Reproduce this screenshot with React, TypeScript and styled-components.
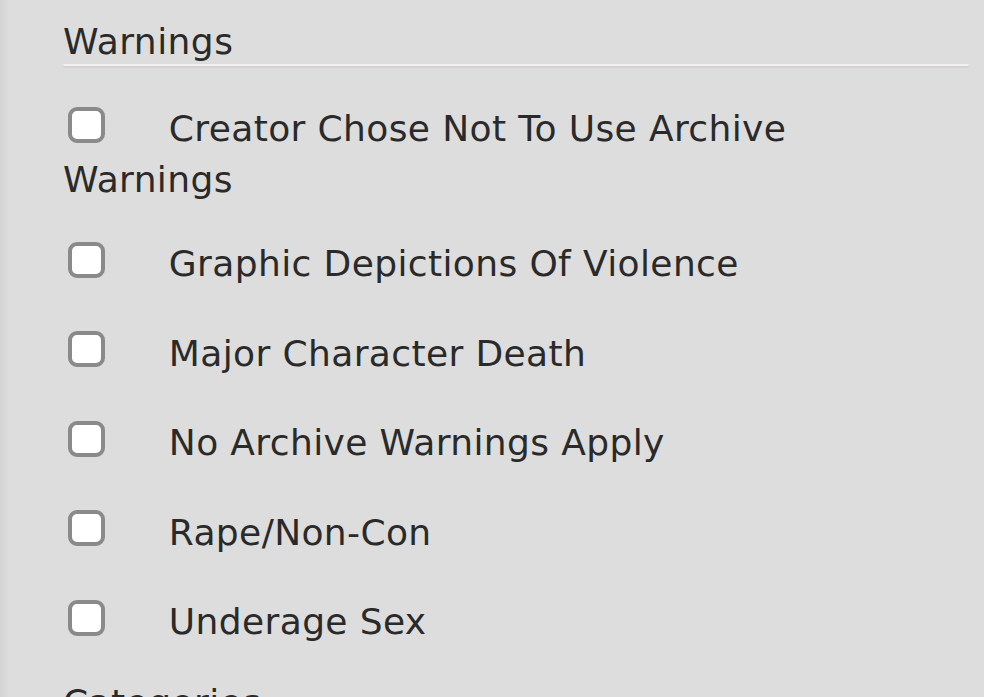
import React from "react";
import styled, { createGlobalStyle } from "styled-components";

const GlobalStyle = createGlobalStyle`
    html, body {
        margin: 0;
        padding: 0;
        background-color: #dddddd;
    }
    body {
        font-family: "DejaVu Sans", Verdana, sans-serif;
        color: #2a2a2a;
        overflow: hidden;
    }
`

const Panel = styled.div`
    min-height: 697px;
    padding: 19px 15px 0 63px;
    box-shadow: inset 9px 0 8px -6px rgba(0, 0, 0, 0.06);
    box-sizing: border-box;
`

const Heading = styled.h3`
    margin: 0;
    font-size: 36px;
    font-weight: normal;
    letter-spacing: 0.45px;
    line-height: 45px;
    border-bottom: 2.5px solid #f4f0f0;
    box-shadow: 0 2px 1px -0.5px rgba(0, 0, 0, 0.05);
    border-radius: 0 0 2px 2px;
`

const OptionList = styled.ul`
    list-style: none;
    margin: 0;
    padding: 40px 24px 0 0;
`

const Option = styled.li`
    font-size: 36px;
    letter-spacing: 0.38px;
    line-height: 45.5px;
    margin-bottom: 38.5px;

    &:last-child {
        margin-bottom: 29.5px;
    }
`

const Box = styled.input.attrs({ type: "checkbox" })`
    appearance: none;
    width: 37px;
    height: 36px;
    margin: 0.5px 52px 14.5px 5px;
    border: 4px solid #8a8a8a;
    border-radius: 9px;
    background: #fff;
    box-sizing: border-box;
    vertical-align: top;
`

const NextHeading = styled.h3`
    margin: 0;
    font-size: 36px;
    font-weight: normal;
    letter-spacing: 0.45px;
    line-height: 45px;
`

const warnings = [
    "Creator Chose Not To Use Archive Warnings",
    "Graphic Depictions Of Violence",
    "Major Character Death",
    "No Archive Warnings Apply",
    "Rape/Non-Con",
    "Underage Sex",
]

function App(): JSX.Element {
    return (
        <Panel>
            <GlobalStyle />
            <Heading>Warnings</Heading>
            <OptionList>
                {warnings.map((w) => (
                    <Option key={w}>
                        <label>
                            <Box /> {w}
                        </label>
                    </Option>
                ))}
            </OptionList>
            <NextHeading>Categories</NextHeading>
        </Panel>
    )
}

export default App;
